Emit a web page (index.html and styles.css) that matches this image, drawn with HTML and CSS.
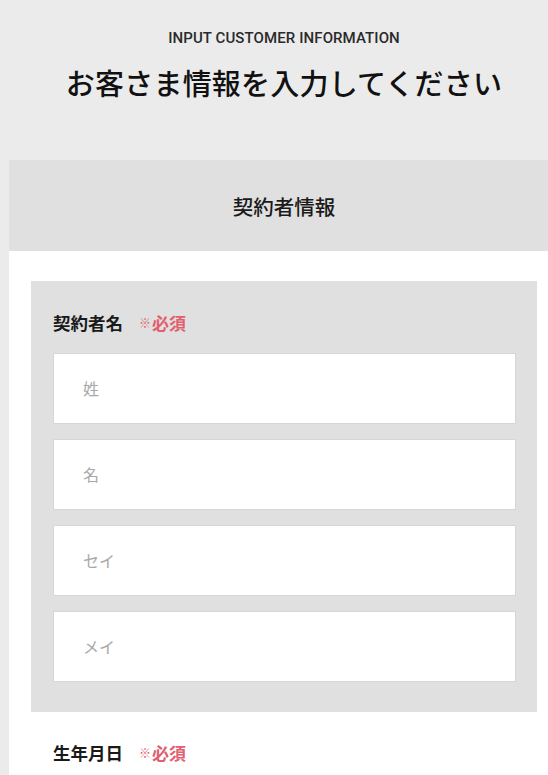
FILE: index.html
```html
<!DOCTYPE html>
<html lang="ja">
<head>
<meta charset="utf-8">
<title>お客さま情報を入力してください</title>
<link rel="stylesheet" href="styles.css">
</head>
<body>
<header class="page-header">
  <p class="eyebrow">INPUT CUSTOMER INFORMATION</p>
  <h1 class="title">お客さま情報を入力してください</h1>
</header>
<section class="card">
  <h2 class="card-head">契約者情報</h2>
  <div class="card-body">
    <div class="name-group">
      <div class="field-label">契約者名<span class="req"><span class="req-mark">※</span>必須</span></div>
      <div class="inputs">
        <input class="text-input" type="text" placeholder="姓">
        <input class="text-input" type="text" placeholder="名">
        <input class="text-input" type="text" placeholder="セイ">
        <input class="text-input" type="text" placeholder="メイ">
      </div>
    </div>
    <div class="birth-group">
      <div class="field-label">生年月日<span class="req"><span class="req-mark">※</span>必須</span></div>
    </div>
  </div>
</section>
</body>
</html>
```

FILE: styles.css
```css
* { box-sizing: border-box; }
html, body {
  margin: 0;
  padding: 0;
  background: #ebebeb;
  font-family: "Noto Sans CJK JP", "Noto Sans", sans-serif;
  color: #1a1a1a;
  overflow: hidden;
}
.page-header {
  text-align: center;
  padding: 29px 0 58px 20px;
}
.eyebrow {
  margin: 0;
  font-family: Roboto, "Noto Sans", sans-serif;
  font-weight: 500;
  font-size: 15px;
  line-height: 18px;
  letter-spacing: 0.1px;
  color: #2a2a2a;
}
.title {
  margin: 15px 0 0;
  font-size: 29px;
  line-height: 40px;
  font-weight: 500;
  letter-spacing: 0.2px;
  color: #111;
}
.card {
  margin-left: 9px;
  background: #fff;
  min-height: 700px;
}
.card-head {
  margin: 0;
  height: 91px;
  padding-left: 11px;
  display: flex;
  align-items: center;
  justify-content: center;
  background: #e0e0e0;
  font-size: 20.5px;
  font-weight: 500;
  color: #1a1a1a;
}
.card-body {
  padding: 30px 11px 0 22px;
}
.name-group {
  background: #e0e0e0;
  padding: 30px 21px 30px 22px;
}
.field-label {
  display: flex;
  align-items: center;
  font-size: 17.5px;
  line-height: 24px;
  font-weight: 700;
  color: #1a1a1a;
  margin-bottom: 18px;
}
.req {
  margin-left: 16px;
  color: #e0606f;
  font-weight: 700;
  font-size: 17px;
  display: inline-flex;
  align-items: center;
}
.req-mark {
  font-size: 12px;
  margin-right: 1px;
}
.inputs {
  display: flex;
  flex-direction: column;
  gap: 15px;
}
.text-input {
  display: block;
  width: 100%;
  height: 71px;
  margin: 0;
  padding: 0 0 2px 29px;
  border: 1px solid #d6d6d6;
  border-radius: 0;
  background: #fff;
  font-family: "Noto Sans CJK JP", "Noto Sans", sans-serif;
  font-size: 16px;
  font-weight: 400;
  color: #333;
  outline: none;
}
.text-input::placeholder {
  color: #a8a8a8;
  opacity: 1;
}
.birth-group {
  padding: 29px 22px 0;
}
```
